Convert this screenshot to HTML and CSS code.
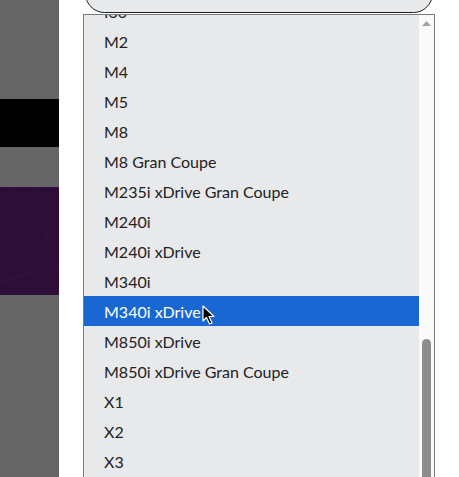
FILE: index.html
```html
<!DOCTYPE html>
<html>
<head>
<meta charset="utf-8">
<link rel="stylesheet" href="styles.css">
</head>
<body>
<div class="page">
  <aside class="side">
    <div class="side-gray s1"></div>
    <div class="side-black"></div>
    <div class="side-gray s2"></div>
    <div class="side-purple">
      <svg class="texture" width="59" height="108" viewBox="0 0 59 108">
        <path d="M0 95 L59 78" stroke="#361640" stroke-width="1" fill="none"/>
        <path d="M0 60 L59 38" stroke="#34143e" stroke-width="1" fill="none"/>
        <path d="M48 45 L42 68" stroke="#34143e" stroke-width="1" fill="none"/>
        <path d="M10 0 L10 50" stroke="#31113b" stroke-width="1" fill="none"/>
        <path d="M38 0 L38 40" stroke="#31113b" stroke-width="1" fill="none"/>
      </svg>
    </div>
    <div class="side-gray s3"></div>
  </aside>
  <main class="main">
    <div class="select"></div>
    <div class="listbox">
      <ul class="options">
        <li class="opt">I30</li>
        <li class="opt">M2</li>
        <li class="opt">M4</li>
        <li class="opt">M5</li>
        <li class="opt">M8</li>
        <li class="opt">M8 Gran Coupe</li>
        <li class="opt">M235i xDrive Gran Coupe</li>
        <li class="opt">M240i</li>
        <li class="opt">M240i xDrive</li>
        <li class="opt">M340i</li>
        <li class="opt selected">M340i xDrive
          <svg class="cursor" width="14" height="21" viewBox="0 0 14 21">
            <path d="M1 1 L1 16 L4.5 12.5 L7.5 19 L10 18 L7 11.5 L12 11.5 Z" fill="#000" stroke="#fff" stroke-width="1.2" stroke-linejoin="round"/>
          </svg>
        </li>
        <li class="opt">M850i xDrive</li>
        <li class="opt">M850i xDrive Gran Coupe</li>
        <li class="opt">X1</li>
        <li class="opt">X2</li>
        <li class="opt">X3</li>
      </ul>
      <div class="scrollbar">
        <svg class="arrow" width="9" height="5" viewBox="0 0 9 5"><path d="M0 5 L4.5 0 L9 5 Z" fill="#a3a3a3"/></svg>
        <div class="thumb"></div>
      </div>
    </div>
  </main>
</div>
</body>
</html>
```
FILE: styles.css
```css
html, body {
  margin: 0;
  padding: 0;
  background: #ffffff;
  overflow: hidden;
}
.page {
  display: flex;
  width: 459px;
  height: 477px;
  overflow: hidden;
}
.side {
  width: 59px;
  flex: none;
  display: flex;
  flex-direction: column;
}
.side-gray { background: #666666; }
.s1 { height: 99px; }
.side-black { height: 48px; background: #000000; }
.s2 { height: 40px; }
.side-purple {
  height: 108px;
  background: #2d0e38;
}
.texture { display: block; }
.s3 { flex: 1; }
.main {
  flex: 1;
  padding-left: 24px;
  display: flex;
  flex-direction: column;
}
.select {
  width: 348px;
  height: 40px;
  margin-top: -26px;
  margin-left: 2px;
  background: #e8e9eb;
  border: 1.5px solid #1f1f1f;
  border-radius: 20px;
  box-sizing: border-box;
  position: relative;
  z-index: 2;
}
.listbox {
  margin-top: 1px;
  width: 352px;
  height: 470px;
  box-sizing: border-box;
  border: 1px solid #7a7a7a;
  border-bottom: none;
  display: flex;
  overflow: hidden;
  background: #e8e9eb;
}
.options {
  list-style: none;
  margin: -19px 0 0 0;
  padding: 0;
  width: 335px;
  flex: none;
  font-family: "Lato", "Liberation Sans", sans-serif;
  font-size: 16px;
  color: #222222;
}
.opt {
  height: 30px;
  box-sizing: border-box;
  padding-top: 2px;
  line-height: 28px;
  padding-left: 20px;
  white-space: nowrap;
  position: relative;
}
.selected {
  background: #1967d2;
  color: #ffffff;
}
.cursor {
  position: absolute;
  left: 118px;
  top: 9px;
}
.scrollbar {
  flex: 1;
  background: #fafafa;
  display: flex;
  flex-direction: column;
  align-items: center;
}
.arrow {
  margin-top: 6px;
  display: block;
}
.thumb {
  margin-top: 313px;
  width: 9px;
  flex: 1;
  background: #8d8d8d;
  border-radius: 5px 5px 0 0;
}
```
